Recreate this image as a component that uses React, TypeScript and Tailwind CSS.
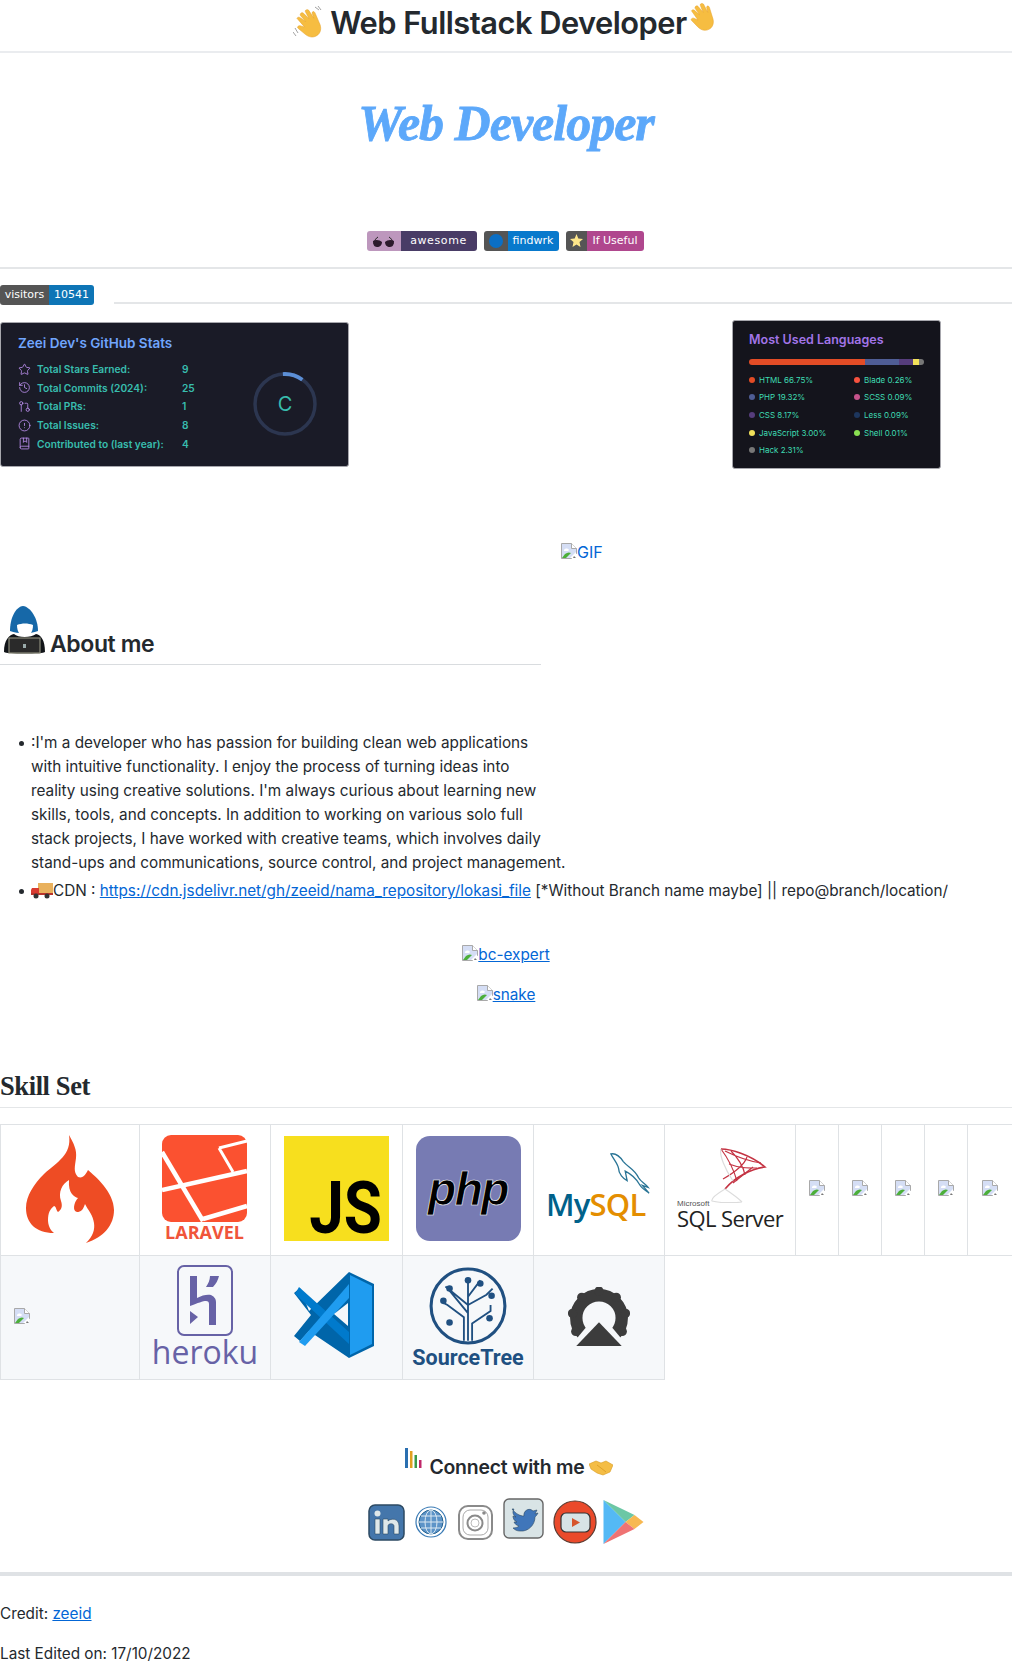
import { Star, History, GitPullRequest, CircleAlert, BookMarked } from "lucide-react";

const sans = "font-['Inter','Liberation_Sans',sans-serif]";
const bullet =
  "relative before:content-[''] before:absolute before:left-[-12px] before:top-[10px] before:w-[5px] before:h-[5px] before:rounded-full before:bg-[#24292e]";

function BrokenImage({ className = "" }: { className?: string }) {
  return (
    <svg width="16" height="16" viewBox="0 0 16 16" className={`inline-block align-[-1px] ${className}`}>
      <path d="M.5.500h10l5 5v5l-5 5H.5z" fill="#d5def5" stroke="#a9a9a9" />
      <path d="M10.500.500v5h5" fill="#fff" stroke="#a9a9a9" />
      <path d="M3 7c1-2 4-2 5 0l-1 1H3z" fill="#fff" />
      <path d="M1 15l3-4c2-1.500 4-2 6-1l-5 5z" fill="#4caf3a" />
      <path d="M9 15l6-6v6z" fill="#fff" />
      <path d="M13 13l2 2h-3z" fill="#777" />
    </svg>
  );
}

function Hand({ wave }: { wave?: boolean }) {
  return (
    <svg width="32" height="34" viewBox="0 0 32 34">
      {wave && <path d="M2 22l3 5M0 26l3 4M22 1l4 3M25 0l3 4" stroke="#8a8a8a" strokeWidth="0.800" fill="none" />}
      <g transform={wave ? "rotate(-28 16 18) translate(1 2) scale(.88)" : "rotate(-22 16 18) translate(2 0) scale(.85)"}>
        <path
          d="M8 6c2-1 3 0 4 2l3 6-2-9c0-2 3-3 4-1l3 9 0-9c0-2 3-2 4 0l1 11 1-6c1-2 3-1 3 1l-1 12c0 7-4 12-10 12-5 0-8-3-10-7L4 17c-1-2 1-3 3-2l4 4z"
          fill="#f6bd41"
          stroke="#e8a52f"
          strokeWidth="0.600"
        />
      </g>
    </svg>
  );
}

function Hacker() {
  return (
    <svg width="47" height="50" viewBox="0 0 47 50" className="mb-[5px] shrink-0">
      <path d="M23 2c8 1 15 13 15 25-8 3-20 3-28 0C10 15 15 3 23 2z" fill="#1668a8" />
      <path d="M14 30c4 4 17 4 22 0 5 1 9 6 9 18-1 2-40 2-41 0 0-12 5-17 10-18z" fill="#111418" />
      <path d="M17 21c5-2 11-2 16 0 0 7-3 11-8 11s-8-4-8-11z" fill="#fff" />
      <rect x="9" y="34" width="31" height="15" fill="#2a2a2a" stroke="#8a8a7a" strokeWidth="1.200" />
      <rect x="23" y="40" width="3" height="4" fill="#9aa" />
    </svg>
  );
}

function Truck() {
  return (
    <svg width="22" height="18" viewBox="0 0 22 18" className="inline-block align-[-3px]">
      <rect x="7" y="2" width="15" height="11" fill="#e9b15d" />
      <path d="M1 7h7v6H0V9z" fill="#d83b31" />
      <rect x="0" y="12" width="22" height="2" fill="#b9342b" />
      <circle cx="5" cy="15" r="2.500" fill="#333" />
      <circle cx="16" cy="15" r="2.500" fill="#333" />
    </svg>
  );
}

function Stats() {
  const rows = [
    { Icon: Star, label: "Total Stars Earned:", val: "9" },
    { Icon: History, label: "Total Commits (2024):", val: "25" },
    { Icon: GitPullRequest, label: "Total PRs:", val: "1" },
    { Icon: CircleAlert, label: "Total Issues:", val: "8" },
    { Icon: BookMarked, label: "Contributed to (last year):", val: "4" },
  ];
  return (
    <div className="w-[349px] h-[145px] bg-[#1a1b27] rounded-[3px] border border-[#a7a7ad] pl-[17px] pt-[11px] flex justify-between">
      <div>
        <div className="text-[13.500px] leading-[18px] font-semibold text-[#70a5fd]">Zeei Dev's GitHub Stats</div>
        <div className="mt-[8px] flex flex-col gap-[0.700px]">
          {rows.map(({ Icon, label, val }) => (
            <div key={label} className="flex items-center h-[18px] text-[10.200px] font-semibold text-[#38bdae]">
              <Icon size={13} strokeWidth={1.500} className="text-[#bf91f3] mr-[6px]" />
              <span className="w-[145px]">{label}</span>
              <span>{val}</span>
            </div>
          ))}
        </div>
      </div>
      <div className="mr-[31px] mt-[38px] w-[64px] h-[64px] relative">
        <svg width="64" height="64" viewBox="0 0 64 64">
          <circle cx="32" cy="32" r="30" fill="none" stroke="#2c3650" strokeWidth="3.500" />
          <path d="M32 2a30 30 0 0 1 19 7" fill="none" stroke="#5c8fd6" strokeWidth="3.800" transform="rotate(-4 32 32)" />
        </svg>
        <span className="absolute inset-0 flex items-center justify-center text-[20px] font-normal text-[#38bdae]">C</span>
      </div>
    </div>
  );
}

function Langs() {
  const left = [
    ["#e34c26", "HTML 66.75%"],
    ["#4f5d95", "PHP 19.32%"],
    ["#563d7c", "CSS 8.17%"],
    ["#f1e05a", "JavaScript 3.00%"],
    ["#777", "Hack 2.31%"],
  ];
  const right = [
    ["#f7523f", "Blade 0.26%"],
    ["#c6538c", "SCSS 0.09%"],
    ["#1d365d", "Less 0.09%"],
    ["#89e051", "Shell 0.01%"],
  ];
  const col = (items: string[][], w: string) => (
    <div className={`${w} flex flex-col gap-[4.700px]`}>
      {items.map(([c, t]) => (
        <div key={t} className="flex items-center gap-[4px] h-[13px] text-[8px] text-[#3fdcb3]">
          <span className="w-[6px] h-[6px] rounded-full" style={{ background: c }} />
          {t}
        </div>
      ))}
    </div>
  );
  return (
    <div className="w-[209px] h-[149px] bg-[#14141c] rounded-[3px] border border-[#a7a7ad] pl-[16px] pt-[10px]">
      <div className="text-[12.500px] leading-[18px] font-semibold text-[#a274e8]">Most Used Languages</div>
      <div className="mt-[10px] w-[175px] h-[6px] rounded-full overflow-hidden flex">
        <div className="bg-[#e34c26] w-[116px]" />
        <div className="bg-[#4f5d95] w-[34px]" />
        <div className="bg-[#563d7c] w-[14px]" />
        <div className="bg-[#f1e05a] w-[6px]" />
        <div className="bg-[#777] w-[5px]" />
      </div>
      <div className="mt-[8px] flex">
        {col(left, "w-[105px]")}
        {col(right, "w-[70px]")}
      </div>
    </div>
  );
}

function CodeIgniter() {
  return (
    <svg width="88" height="108" viewBox="0 0 88 108" className="mb-[3px]">
      <path
        d="M43 0c5 9 8 15 7 23-1 8-3 14 2 19 5 2 8-3 10-7 7 6 26 22 26 40 0 15-10 27-28 33 7-7 9-13 8-20-1-8-6-13-9-19-2 6-4 8-8 8-5-1-3-10 1-14-4-1-10-5-9-18-7 4-11 12-8 21 2 6 0 9-3 11-2-2-2-6-4-6-4 3-6 7-6 14 0 5 2 10 6 13C10 98 0 88 0 73c0-12 8-24 18-34C31 27 46 20 43 0z"
        fill="#ee4c24"
      />
    </svg>
  );
}

function Laravel() {
  return (
    <svg width="86" height="110" viewBox="0 0 86 110">
      <rect x="0" y="0" width="85" height="87" rx="9" fill="#fb5130" />
      <g stroke="#fff" strokeWidth="4.500" fill="none">
        <path d="M0 17L41 86" />
        <path d="M0 55L85 36" />
        <path d="M41 84L85 71" />
        <path d="M57 13L85 6M57 13L71 37" strokeWidth="3" />
      </g>
      <text x="42.500" y="104" textAnchor="middle" className="font-['Open_Sans',sans-serif]" fontWeight="700" fontSize="18" fill="#f0553a">
        LARAVEL
      </text>
    </svg>
  );
}

function Js() {
  return (
    <div className="w-[105px] h-[105px] bg-[#f7df1e] relative mx-auto mb-[3px]">
      <span className="absolute right-[7px] bottom-[-2px] text-[62px] leading-none font-bold text-black scale-y-115 origin-[50%_84%] font-['Roboto',sans-serif]">
        JS
      </span>
    </div>
  );
}

function Php() {
  return (
    <div className="w-[105px] h-[105px] bg-[#777bb3] rounded-[14px] flex items-center justify-center mx-auto mb-[3px]">
      <span
        className="text-[46px] leading-[50px] font-bold italic tracking-[-1.500px] text-black font-['Liberation_Sans',sans-serif]"
        style={{ WebkitTextStroke: "0.6px white" }}
      >
        php
      </span>
    </div>
  );
}

function MySql() {
  return (
    <div className="relative w-[108px] h-[76px] mx-auto mt-[2px]">
      <svg width="46" height="42" viewBox="0 0 46 44" className="absolute right-0 top-0">
        <path
          d="M3 1c5-1 9 2 13 8 5 6 12 8 16 17 2 4 7 6 10 10l-6-2 7 8c-4-3-8-5-10-9-4-7-9-11-15-14l2 10c-4-2-9-7-9-13-1-5-5-9-8-15z"
          fill="none"
          stroke="#2a7596"
          strokeWidth="1.400"
        />
      </svg>
      <span className="absolute left-[1px] bottom-[5px] text-[31px] leading-[40px] font-semibold tracking-[-0.800px] font-['Open_Sans',sans-serif]">
        <span className="text-[#00618a]">My</span>
        <span className="text-[#e48e00]">SQL</span>
      </span>
    </div>
  );
}

function SqlServer() {
  return (
    <div className="relative w-[106px] h-[86px] mx-auto">
      <svg width="56" height="60" viewBox="0 0 56 60" className="absolute left-[34px] top-[-4px]">
        <path d="M10 6c10 0 30 6 44 18-14 2-30 10-40 22" fill="none" stroke="#c43343" strokeWidth="1.600" />
        <path d="M10 6c6 8 12 18 16 32M20 8c6 6 12 14 14 24M36 14c-2 6-10 14-24 22M50 20C36 18 26 14 14 8M46 25c-10 0-18 0-28-4M42 24L22 40" fill="none" stroke="#c43343" strokeWidth="1.200" />
        <path d="M14 46C4 52 0 56 1 58c6 2 22 2 30 1M10 6c-2 6 4 20 12 32M14 46c6 4 12 8 17 13" fill="none" stroke="#dcdcdc" strokeWidth="1.200" />
      </svg>
      <span className="absolute left-0 top-[52px] text-[8px] leading-[9px] text-[#555] font-['Liberation_Sans',sans-serif]">Microsoft</span>
      <span className="absolute left-0 top-[61px] text-[22px] leading-[20px] tracking-[-0.600px] text-[#222] whitespace-nowrap font-['Open_Sans',sans-serif]">
        SQL Server
      </span>
    </div>
  );
}

function Heroku() {
  return (
    <div className="flex flex-col items-center pb-[3px]">
      <svg width="56" height="71" viewBox="0 0 56 71">
        <rect x="1" y="1" width="54" height="69" rx="6" fill="none" stroke="#6762a6" strokeWidth="2" />
        <path d="M13 11h7v22c5-3 11-4 14-3 2 1 5 3 5 7v23h-7V39c0-2-1-3-3-3-3 0-8 2-16 5z" fill="#6762a6" />
        <path d="M33 11h9c-1 4-3 8-6 11h-7c2-3 4-7 4-11zM13 46l8 6-8 7z" fill="#6762a6" />
      </svg>
      <span className="text-[32px] leading-[30px] mt-[1px] font-medium text-[#6762a6] font-['Open_Sans',sans-serif]">heroku</span>
    </div>
  );
}

function VsCode() {
  return (
    <svg width="82" height="86" viewBox="0 0 82 86" className="mb-[6px] mr-[6px]">
      <path d="M56 0L16 39 7 16 1 21l17 22L1 64l6 5 9-10 40 27 25-12V12z" fill="#0065a9" />
      <path d="M57 3l22 11v58L57 83z" fill="#1f9cf0" />
      <path d="M57 3l-9 9v14l9-8zM57 83L48 74V60l9 8z" fill="#0065a9" />
      <path d="M6 15L56 60v12L2 22z" fill="#007acc" />
      <path d="M6 70L56 12v14L12 74z" fill="#1f9cf0" />
      <path d="M41 42l14-11v23z" fill="#f5f7fa" />
    </svg>
  );
}

function SourceTree() {
  return (
    <div className="flex flex-col items-center">
      <svg width="80" height="80" viewBox="0 0 76 78">
        <circle cx="38" cy="39" r="36" fill="none" stroke="#205081" strokeWidth="3" />
        <g stroke="#205081" strokeWidth="1.800" fill="none">
          <path d="M38 73V16M34 73V50L18 38l-4-2M42 73V56l18-12 0-6M38 46L20 24M38 38l18-10 6-6M38 30l12-16M38 38L16 20" />
        </g>
        <g fill="#205081">
          <circle cx="38" cy="14" r="3.200" />
          <circle cx="20" cy="22" r="3.200" />
          <circle cx="50" cy="17" r="3.200" />
          <circle cx="61" cy="29" r="3.200" />
          <circle cx="14" cy="34" r="3.200" />
          <circle cx="59" cy="51" r="3.200" />
          <circle cx="20" cy="55" r="3.200" />
        </g>
      </svg>
      <span className="text-[21.500px] leading-[24px] font-bold text-[#205081] font-['Roboto',sans-serif]">SourceTree</span>
    </div>
  );
}

function Gear() {
  const bumps = [
    [30, 4],
    [13.300, 10],
    [46.700, 10],
    [4.400, 25.500],
    [55.600, 25.500],
    [7.500, 43],
    [52.500, 43],
  ];
  return (
    <svg width="62" height="62" viewBox="0 0 60 60">
      <circle cx="30" cy="30" r="22" fill="none" stroke="#3c3c3c" strokeWidth="12" />
      {bumps.map(([x, y]) => (
        <circle key={x} cx={x} cy={y} r="4.500" fill="#3c3c3c" />
      ))}
      <path d="M30 24L60 60H0z" fill="#f6f8fa" />
      <path d="M30 34L52 57H8z" fill="#3c3c3c" />
    </svg>
  );
}

function Cell({ children, className = "" }: { children?: React.ReactNode; className?: string }) {
  return <td className={`border border-[#dfe2e5] text-center align-middle ${className}`}>{children}</td>;
}

function SkillTable() {
  return (
    <table className="mt-[16px] w-[1012px] table-fixed border-collapse">
      <colgroup>
        <col className="w-[139px]" />
        <col className="w-[131px]" />
        <col className="w-[132px]" />
        <col className="w-[131px]" />
        <col className="w-[131px]" />
        <col className="w-[131px]" />
        <col className="w-[43px]" />
        <col className="w-[43px]" />
        <col className="w-[43px]" />
        <col className="w-[43px]" />
        <col className="w-[45px]" />
      </colgroup>
      <tbody>
        <tr className="h-[131px]">
          <Cell><div className="flex justify-center"><CodeIgniter /></div></Cell>
          <Cell><div className="flex justify-center"><Laravel /></div></Cell>
          <Cell><Js /></Cell>
          <Cell><Php /></Cell>
          <Cell><MySql /></Cell>
          <Cell><SqlServer /></Cell>
          {[1, 2, 3, 4, 5].map((i) => (
            <Cell key={i}><BrokenImage className="block! mx-auto mb-[4px]" /></Cell>
          ))}
        </tr>
        <tr className="h-[124px] bg-[#f6f8fa]">
          <Cell className="text-left! pl-[13px]"><BrokenImage className="block! mb-[3px]" /></Cell>
          <Cell><Heroku /></Cell>
          <Cell><div className="flex justify-center"><VsCode /></div></Cell>
          <Cell><SourceTree /></Cell>
          <Cell><div className="flex justify-center"><Gear /></div></Cell>
        </tr>
      </tbody>
    </table>
  );
}

function Socials() {
  return (
    <div className="flex items-center justify-center gap-[6px] mt-[16px] h-[48px]">
      <svg width="37" height="37" viewBox="0 0 37 37" className="mr-[4px]">
        <rect x="1" y="1" width="35" height="35" rx="6" fill="#4476ab" stroke="#2d4a63" strokeWidth="1.500" />
        <path d="M7 15h5v15H7zM15 15h5v2c3-3 11-3 11 5v8h-5v-8c0-3-6-3-6 0v8h-5z" fill="#dfe8ea" stroke="#2d4a63" strokeWidth="0.600" />
        <circle cx="9.500" cy="9.500" r="3" fill="#dfe8ea" />
      </svg>
      <svg width="32" height="32" viewBox="0 0 32 32">
        <circle cx="16" cy="16" r="15" fill="none" stroke="#3b7bb5" strokeWidth="1.200" />
        <circle cx="16" cy="16" r="12" fill="#5d94c8" stroke="#23618f" strokeWidth="1" />
        <path d="M4 16h24M16 4v24M6 10h20M6 22h20" stroke="#dbe8f2" strokeWidth="1" />
        <ellipse cx="16" cy="16" rx="6" ry="12" fill="none" stroke="#dbe8f2" strokeWidth="1" />
      </svg>
      <svg width="37" height="37" viewBox="0 0 37 37" className="ml-[4px]">
        <rect x="2" y="2" width="33" height="33" rx="9" fill="#fff" stroke="#8a8a8a" strokeWidth="2" />
        <rect x="6" y="6" width="25" height="25" rx="7" fill="none" stroke="#a9a9a9" strokeWidth="1" />
        <circle cx="18" cy="19" r="7.500" fill="none" stroke="#8a8a8a" strokeWidth="2" />
        <circle cx="18" cy="19" r="4" fill="none" stroke="#bbb" strokeWidth="1" />
        <circle cx="27" cy="9" r="1.800" fill="#8a8a8a" />
      </svg>
      <svg width="41" height="41" viewBox="0 0 41 41" className="ml-[3px] mb-[8px]">
        <rect x="1" y="1" width="39" height="39" rx="5" fill="#d9e4e6" stroke="#666" strokeWidth="1.400" />
        <path d="M9 11c4 5 8 7 12 7-1-5 5-9 9-5l4-1-2 4 3-1c-1 2-2 3-3 4 0 8-7 15-15 14-3 0-5-1-7-3 3 0 5-1 6-2-3-1-4-2-5-4h3c-3-1-4-4-4-6l3 1c-3-2-4-5-2-8z" fill="#4076ba" stroke="#2d4a63" strokeWidth="0.600" />
      </svg>
      <svg width="44" height="44" viewBox="0 0 44 44" className="ml-[3px]">
        <circle cx="22" cy="22" r="21" fill="#ea4a2b" stroke="#5a3a30" strokeWidth="1.200" />
        <rect x="8" y="13" width="29" height="19" rx="5" fill="#d7e3e5" stroke="#333" strokeWidth="1.200" />
        <path d="M19 18l8 4.500-8 4.500z" fill="#d6552c" />
      </svg>
      <svg width="41" height="44" viewBox="0 0 40 44">
        <path d="M0 0l22 22L0 44z" fill="#54b9f5" />
        <path d="M0 0l31 15-9 7z" fill="#6cc7a5" />
        <path d="M31 15l9 7-9 7-9-7z" fill="#f7b851" />
        <path d="M0 44l31-15-9-7z" fill="#ef7373" />
      </svg>
    </div>
  );
}

export default function App() {
  return (
    <div className={`w-[1012px] h-[1665px] overflow-hidden bg-white text-[#24292e] text-[15.300px] leading-[24px] ${sans}`}>
      {/* header */}
      <h1 className="h-[53px] border-b-2 border-[#eaecef] flex justify-center text-[30.800px] leading-[46px] font-semibold tracking-[-0.500px]">
        <span className="mt-[6px] mr-[5px]"><Hand wave /></span>
        <span>Web Fullstack Developer</span>
        <span className="mt-[2px]"><Hand /></span>
      </h1>

      <div className="h-[178px] flex justify-center pt-[34px]">
        <span className="text-[#5ca8fa] text-[50px] leading-[72px] italic font-bold font-['Liberation_Serif',serif] tracking-[-1px] [-webkit-text-stroke:0.8px_#5ca8fa]">
          Web Developer
        </span>
      </div>

      <div className="flex justify-center gap-[7px] h-[20px] font-['DejaVu_Sans',sans-serif] text-[11px] leading-[19px] text-white pr-[2px]">
        <div className="flex rounded-[3px] overflow-hidden">
          <span className="w-[34px] bg-[#bd97bd] flex items-center justify-center">
            <svg width="21" height="11" viewBox="0 0 21 11">
              <path d="M1 8c0-3 2-6 4-7M20 8c0-3-2-6-4-7" stroke="#222" fill="none" />
              <path d="M0 5c3-2 7-1 9 1 0 3-2 5-5 5S0 8 0 5zM21 5c-3-2-7-1-9 1 0 3 2 5 5 5s4-3 4-6z" fill="#2b1a2b" />
            </svg>
          </span>
          <span className="w-[76px] bg-[#493c66] text-center tracking-[0.600px]">awesome</span>
        </div>
        <div className="flex rounded-[3px] overflow-hidden">
          <span className="w-[24px] bg-[#555] flex items-center justify-center">
            <span className="w-[14px] h-[14px] rounded-full bg-[#0b6fc5]" />
          </span>
          <span className="w-[51px] bg-[#0879cc] text-center">findwrk</span>
        </div>
        <div className="flex rounded-[3px] overflow-hidden">
          <span className="w-[21px] bg-[#555] flex items-center justify-center">
            <svg width="13" height="15" viewBox="0 0 13 15">
              <path d="M6.500 0l1.800 4.500 4.700.500-3.500 3 1 5-4-2.500-4 2.500 1-5L0 5l4.700-.500z" fill="#fde68a" />
            </svg>
          </span>
          <span className="w-[57px] bg-[#b0478e] text-center">If Useful</span>
        </div>
      </div>

      <hr className="mt-[16px] border-t-2 border-[#e4e6e8]" />

      <div className="mt-[16px] flex items-end gap-[20px] h-[21px]">
        <div className="flex w-[94px] h-[20px] rounded-[3px] overflow-hidden text-[11px] leading-[19px] text-white font-['DejaVu_Sans',sans-serif] mb-[1px] shrink-0">
          <span className="w-[49px] bg-[#555] text-center">visitors</span>
          <span className="w-[45px] bg-[#0e75b6] text-center">10541</span>
        </div>
        <div className="flex-1 border-t-2 border-[#e4e6e8] mb-[2px]" />
      </div>

      <div className="mt-[14px] flex justify-between pr-[71px] items-start">
        <div className="mt-[2px]"><Stats /></div>
        <Langs />
      </div>

      <div className="mt-[71px] h-[24px] pl-[561px] flex items-center">
        <a className="text-[#0366d6] text-[16px] leading-[24px]"><BrokenImage />GIF</a>
      </div>

      <h2 className="mt-[39px] w-[541px] border-b border-[#d9dcdf] pb-[5px] h-[62px] flex items-end text-[23px] leading-[30px] font-semibold tracking-[-0.400px]">
        <Hacker />
        <span className="ml-[3px]">About me</span>
      </h2>

      <ul className="mt-[66px] pl-[31px] list-none">
        <li className={`whitespace-nowrap ${bullet}`}>
          :I'm a developer who has passion for building clean web applications<br />
          with intuitive functionality. I enjoy the process of turning ideas into<br />
          reality using creative solutions. I'm always curious about learning new<br />
          skills, tools, and concepts. In addition to working on various solo full<br />
          stack projects, I have worked with creative teams, which involves daily<br />
          stand-ups and communications, source control, and project management.
        </li>
        <li className={`mt-[4px] whitespace-nowrap ${bullet}`}>
          <Truck />CDN :{" "}
          <a className="text-[#0366d6] underline">https://cdn.jsdelivr.net/gh/zeeid/nama_repository/lokasi_file</a>{" "}
          [*Without Branch name maybe] || repo@branch/location/
        </li>
      </ul>

      <div className="mt-[40px] text-center h-[24px]">
        <a className="text-[#0366d6] underline"><BrokenImage />bc-expert</a>
      </div>
      <div className="mt-[16px] text-center h-[24px]">
        <a className="text-[#0366d6] underline"><BrokenImage />snake</a>
      </div>

      <h2 className="mt-[64px] h-[37px] border-b border-[#e4e6e8] text-[26.500px] leading-[30px] font-bold tracking-[-0.400px] font-['Liberation_Serif',serif]">
        Skill Set
      </h2>

      <SkillTable />

      <div className="mt-[62px] pl-[6px] flex justify-center items-end h-[40px] text-[19.400px] leading-[30px] font-semibold tracking-[-0.200px]">
        <svg width="17" height="21" viewBox="0 0 17 21" className="mb-[13px] mr-[7px]">
          <rect x="0" y="0" width="3" height="20" fill="#2a6fb0" />
          <rect x="5" y="3" width="2.500" height="17" fill="#e0a020" />
          <rect x="9.500" y="7" width="2.500" height="13" fill="#3a9a4a" />
          <rect x="14" y="12" width="2.500" height="8" fill="#c0286a" />
        </svg>
        <span>Connect with me</span>
        <svg width="24" height="16" viewBox="0 0 24 16" className="ml-[4px] mb-[6px]">
          <path d="M0 4l7-3 5 2 5-2 7 4-3 7-7 3-6-2-6-4z" fill="#f4bd45" stroke="#d99a20" strokeWidth="0.600" />
          <path d="M8 5l4 3 5 4" stroke="#d99a20" strokeWidth="0.800" fill="none" />
        </svg>
      </div>

      <Socials />

      <hr className="mt-[26px] border-t-4 border-[#dfe2e5]" />

      <p className="mt-[26px] h-[24px]">
        Credit: <a className="text-[#0366d6] underline">zeeid</a>
      </p>
      <p className="mt-[16px] h-[24px]">Last Edited on: 17/10/2022</p>
    </div>
  );
}
